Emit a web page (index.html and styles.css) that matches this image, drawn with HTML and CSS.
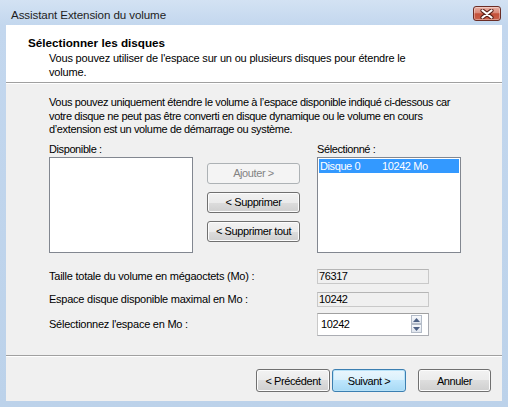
FILE: index.html
```html
<!DOCTYPE html>
<html lang="fr">
<head>
<meta charset="utf-8">
<title>Assistant Extension du volume</title>
<link rel="stylesheet" href="styles.css">
</head>
<body>
<div class="window">
  <div class="titlebar">
    <span class="title">Assistant Extension du volume</span>
    <div class="close">
      <svg width="14" height="10" viewBox="0 0 14 10">
        <path d="M2.5 1.5 L11.5 8.5 M11.5 1.5 L2.5 8.5" stroke="#5a2019" stroke-width="4.2" stroke-linecap="round" fill="none"/>
        <path d="M2.5 1.5 L11.5 8.5 M11.5 1.5 L2.5 8.5" stroke="#ffffff" stroke-width="2.2" stroke-linecap="round" fill="none"/>
      </svg>
    </div>
  </div>
  <div class="client">
    <div class="header">
      <div class="h-title">Sélectionner les disques</div>
      <div class="h-sub">Vous pouvez utiliser de l'espace sur un ou plusieurs disques pour étendre le<br>volume.</div>
    </div>
    <div class="content">
      <p class="intro">Vous pouvez uniquement étendre le volume à l’espace disponible indiqué ci-dessous car<br>votre disque ne peut pas être converti en disque dynamique ou le volume en cours<br>d’extension est un volume de démarrage ou système.</p>
      <div class="pick">
        <div class="col">
          <div class="lbl">Disponible :</div>
          <div class="listbox"></div>
        </div>
        <div class="btns">
          <div class="btn small disabled">Ajouter &gt;</div>
          <div class="btn small">&lt; Supprimer</div>
          <div class="btn small">&lt; Supprimer tout</div>
        </div>
        <div class="col right">
          <div class="lbl">Sélectionné :</div>
          <div class="listbox">
            <div class="item sel"><span class="c1">Disque 0</span><span>10242 Mo</span></div>
          </div>
        </div>
      </div>
      <div class="fields">
        <div class="flabel">Taille totale du volume en mégaoctets (Mo) :</div>
        <div class="tb ro">76317</div>
        <div class="flabel">Espace disque disponible maximal en Mo :</div>
        <div class="tb ro">10242</div>
        <div class="flabel">Sélectionnez l'espace en Mo :</div>
        <div class="spin">
          <span class="spin-val">10242</span>
          <div class="spin-btns">
            <div class="sb up"><svg width="7" height="4" viewBox="0 0 7 4"><path d="M0 4 L3.5 0 L7 4 Z" fill="#4d6185"/></svg></div>
            <div class="sb down"><svg width="7" height="4" viewBox="0 0 7 4"><path d="M0 0 L3.5 4 L7 0 Z" fill="#4d6185"/></svg></div>
          </div>
        </div>
      </div>
    </div>
    <div class="footer">
      <div class="btn big">&lt; Précédent</div>
      <div class="btn big default">Suivant &gt;</div>
      <div class="btn big cancel">Annuler</div>
    </div>
  </div>
</div>
</body>
</html>
```
FILE: styles.css
```css
* { box-sizing: border-box; }
html, body { margin: 0; padding: 0; }
body {
  width: 508px;
  height: 407px;
  overflow: hidden;
  font-family: "Liberation Sans", Arial, sans-serif;
  font-size: 11px;
  letter-spacing: -0.4px;
  color: #000;
}
.window {
  width: 508px;
  height: 407px;
  display: flex;
  flex-direction: column;
  background: linear-gradient(#d3e2f3 0, #c3d7ee 25px, #bcd2ea 100%);
}
.titlebar {
  height: 25px;
  flex: none;
  display: flex;
  align-items: flex-start;
  padding: 0 7px 0 11px;
}
.title {
  font-size: 11.6px;
  letter-spacing: -0.1px;
  line-height: 14px;
  margin-top: 8px;
  color: #1e1e1e;
}
.close {
  margin-left: auto;
  margin-top: 6px;
  width: 28px;
  height: 15px;
  border: 1px solid #6b2d25;
  border-radius: 3px;
  background: linear-gradient(#e8b0a4 0%, #d98878 45%, #c55039 52%, #c8604b 100%);
  box-shadow: inset 0 0 0 1px rgba(255,255,255,0.35);
  display: flex;
  align-items: center;
  justify-content: center;
}
.client {
  flex: 1;
  margin: 0 6px 6px;
  background: #f0f0f0;
  display: flex;
  flex-direction: column;
}
.header {
  height: 58px;
  flex: none;
  background: #fff;
  border-bottom: 1px solid #a0a0a0;
  padding: 11px 0 0 22px;
}
.h-title {
  font-weight: bold;
  font-size: 11.7px;
  letter-spacing: 0;
  line-height: 13px;
}
.h-sub {
  margin-top: 2px;
  padding-left: 21px;
  line-height: 14px;
  letter-spacing: -0.18px;
  white-space: nowrap;
}
.content {
  flex: 1;
  border-top: 1px solid #fff;
  padding: 12px 0 0 43px;
}
.intro {
  margin: 0;
  line-height: 13.5px;
  letter-spacing: -0.36px;
  white-space: nowrap;
}
.pick {
  display: flex;
  margin-top: 6px;
}
.col { width: 144px; }
.col.right { margin-left: 17px; }
.lbl {
  line-height: 13px;
  margin-bottom: 1px;
}
.listbox {
  height: 96px;
  background: #fff;
  border: 1px solid #828790;
  padding: 1px;
}
.item {
  height: 14px;
  line-height: 14px;
  padding-left: 1px;
  display: flex;
  white-space: nowrap;
}
.item .c1 { width: 62px; }
.item.sel {
  background: #3399ff;
  color: #fff;
}
.btns {
  margin-left: 14px;
  padding-top: 20px;
  width: 93px;
  display: flex;
  flex-direction: column;
  gap: 8px;
}
.btn {
  display: flex;
  align-items: center;
  justify-content: center;
  border: 1px solid #707070;
  border-radius: 3px;
  background: linear-gradient(#f2f2f2 0%, #ebebeb 50%, #dddddd 50%, #cfcfcf 100%);
  box-shadow: inset 0 0 0 1px #fcfcfc;
  white-space: nowrap;
}
.btn.small { height: 21px; }
.btn.disabled {
  border-color: #adb2b5;
  background: #f4f4f4;
  box-shadow: none;
  color: #838383;
}
.fields {
  display: grid;
  grid-template-columns: 268px 112px;
  margin-top: 16px;
  align-items: center;
}
.flabel {
  line-height: 13px;
  letter-spacing: -0.24px;
}
.tb.ro {
  height: 15px;
  border: 1px solid #c9c9c9;
  border-top-color: #b5b5b5;
  background: #f0f0f0;
  line-height: 13px;
  padding-left: 1px;
}
.fields .tb.ro:nth-of-type(4) { margin-top: 8px; }
.fields .flabel:nth-of-type(3) { margin-top: 8px; }
.spin {
  margin-top: 6px;
  height: 23px;
  border: 1px solid #abadb3;
  border-top-color: #a0a0a0;
  border-left-color: #c9c9c9;
  background: #fff;
  display: flex;
  align-items: center;
  padding-left: 3px;
  padding-right: 6px;
}
.fields .flabel:nth-of-type(5) { margin-top: 6px; }
.spin-val { flex: 1; }
.spin-btns {
  display: flex;
  flex-direction: column;
}
.sb {
  width: 11px;
  height: 9px;
  border: 1px solid #b4bcc8;
  background: linear-gradient(#f7f9fc, #dfe5ee);
  display: flex;
  align-items: center;
  justify-content: center;
}
.footer {
  height: 46px;
  flex: none;
  border-top: 1px solid #a0a0a0;
  box-shadow: inset 0 1px 0 #fff;
  display: flex;
  justify-content: flex-end;
  padding: 13px 11px 0 0;
}
.btn.big {
  width: 74px;
  height: 23px;
}
.btn.default {
  margin-left: 2px;
  border-color: #3c7fb1;
  background: linear-gradient(#eaf6fd 0%, #d9f0fc 50%, #bee6fd 50%, #a7d9f5 100%);
  box-shadow: inset 0 0 0 1px #b7e2f8;
}
.btn.cancel {
  margin-left: 12px;
  width: 73px;
}
```
